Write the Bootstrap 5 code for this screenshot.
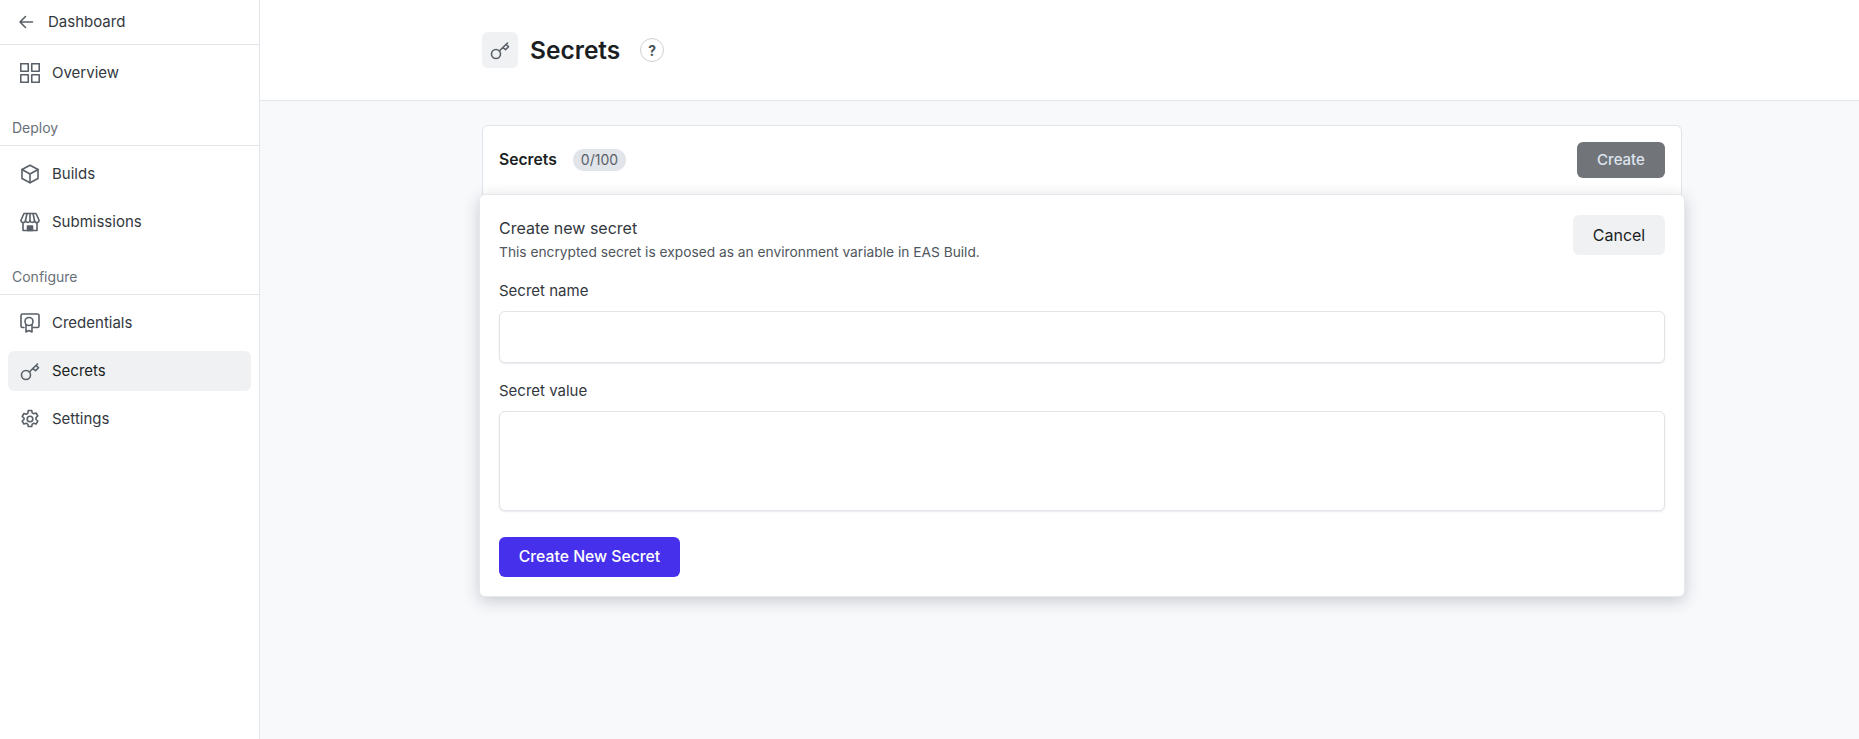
<!DOCTYPE html>
<html lang="en">
<head>
<meta charset="utf-8">
<title>Secrets</title>
<link rel="stylesheet" href="https://cdn.jsdelivr.net/npm/bootstrap@5.3.0/dist/css/bootstrap.min.css">
<style>
html,body{height:100%}
body{font-family:Inter,"Liberation Sans",sans-serif;background:#f8f9fb;color:#1b1f23;overflow:hidden}
.shell{height:739px}
.side{width:260px;flex:none;background:#fff;border-right:1px solid #e1e4e8;height:100%}
.side svg,.page-ico svg{fill:none;stroke:#596068;stroke-width:1.6;stroke-linecap:round;stroke-linejoin:round}
.back-row{height:45px;padding-left:18px;gap:14px;font-size:15px;color:#33383e;border-bottom:1px solid #e1e4e8}
.side-link{height:40px;margin:0 8px 8px;padding:0 12px;gap:12px;border-radius:6px;font-size:15px;color:#33383e;text-decoration:none}
.side-link.on{background:#f0f1f3;color:#1b1f23}
.side-group{height:45px;padding:0 0 7px 12px;font-size:14px;color:#687078;border-bottom:1px solid #e1e4e8;display:flex;align-items:flex-end;margin-bottom:8px}
.top-gap{margin-top:8px}
.main-area{min-width:0}
.page-top{height:101px;background:#fff;border-bottom:1px solid #e1e4e8;padding-left:222px;gap:12px}
.page-ico{width:36px;height:36px;background:#f0f1f3;border-radius:6px}
.page-title{font-size:24.5px;font-weight:600;line-height:1;margin:0 8px 0 0;color:#1b1f23}
.help{width:24px;height:24px;border:1px solid #cdd1d6;border-radius:50%;font-size:14px;font-weight:700;color:#4a5057;background:#fff}
.holder{width:1200px;margin:24px 0 0 222px;position:relative}
.sec-panel{height:71px;background:#fff;border:1px solid #e1e4e8;border-bottom:0;border-radius:6px 6px 0 0;padding:0 16px 2px;}
.sec-name{font-size:15.7px;font-weight:600}
.count{font-size:14px;line-height:1;padding:4px 8px;border-radius:11px;height:22px;background:#e1e4e8;color:#596068;margin-left:16px}
.btn-off{width:88px;height:36px;background:#71757a;color:#dfe5ee;border:0;border-radius:6px;font-size:15px;font-weight:500}
.float-form{position:absolute;top:69px;left:-3px;right:-3px;height:403px;background:#fff;border:1px solid #e6e8eb;border-radius:6px;padding:20px 19px 20px;box-shadow:0 4px 16px rgba(30,40,60,.22)}
.form-h{font-size:16px;line-height:22px;font-weight:400;color:#33383e;margin-top:2px}
.form-sub{font-size:13.75px;line-height:20px;color:#4f565d;margin-top:3px}
.btn-cancel{width:92px;height:40px;background:#f0f1f3;border:0;border-radius:6px;font-size:16px;color:#1b1f23}
.fld-label{font-size:15px;line-height:20px;color:#33383e;margin-bottom:10px;display:block}
.fld{display:block;width:100%;height:52px;background:#fff;border:1px solid #e1e4e8;border-radius:6px;box-shadow:0 1px 2px rgba(30,40,60,.1);margin-bottom:18px}
textarea.fld{height:100px;resize:none;margin-bottom:26px}
.btn-make{width:181px;height:40px;background:#4630eb;color:#fff;border:0;border-radius:6px;font-size:15.75px;font-weight:500}
.fld-first{margin-top:19px}
</style>
</head>
<body>
<div class="shell d-flex">
  <nav class="side">
    <div class="back-row d-flex align-items-center">
      <svg width="16" height="16" viewBox="0 0 16 16"><path d="M14.5 8H2M7.5 2.5 2 8l5.500 5.500"/></svg>
      <span>Dashboard</span>
    </div>
    <div class="top-gap">
      <a class="side-link d-flex align-items-center" href="#">
        <svg width="20" height="20" viewBox="0 0 20 20"><rect x="0.750" y="0.750" width="7.500" height="7.500"/><rect x="11.750" y="0.750" width="7.500" height="7.500"/><rect x="0.750" y="11.750" width="7.500" height="7.500"/><rect x="11.750" y="11.750" width="7.500" height="7.500"/></svg>
        <span>Overview</span>
      </a>
    </div>
    <div class="side-group">Deploy</div>
    <a class="side-link d-flex align-items-center" href="#">
      <svg width="20" height="20" viewBox="0 0 20 20"><path d="M10 1.200 18 5.500v9L10 18.800 2 14.500v-9z"/><path d="M2 5.500 10 10l8-4.500M10 10v8.800"/></svg>
      <span>Builds</span>
    </a>
    <a class="side-link d-flex align-items-center" href="#">
      <svg width="20" height="20" viewBox="0 0 20 20"><path d="M4 1.500h12l3 6.500a2.200 2.200 0 0 1-4.500.6 2.300 2.300 0 0 1-4.500 0 2.300 2.300 0 0 1-4.500 0A2.200 2.200 0 0 1 1 8z"/><path d="M7 1.500 5.500 8.500M13 1.500l1.500 7M10 1.500v7M3 10.500v8h14v-8"/><path d="M7.500 18.500v-4.500h5v4.500z" fill="#596068"/></svg>
      <span>Submissions</span>
    </a>
    <div class="side-group">Configure</div>
    <a class="side-link d-flex align-items-center" href="#">
      <svg width="20" height="20" viewBox="0 0 20 20"><path d="M4 14.500H2.500A1.500 1.500 0 0 1 1 13V2.500A1.500 1.500 0 0 1 2.500 1h15A1.500 1.500 0 0 1 19 2.500V13a1.500 1.500 0 0 1-1.500 1.500H13"/><circle cx="9" cy="8.500" r="4"/><path d="M6 11.500v7.500l3-1.500 3 1.500v-7.500"/></svg>
      <span>Credentials</span>
    </a>
    <a class="side-link on d-flex align-items-center" href="#">
      <svg width="20" height="20" viewBox="0 0 20 20"><circle cx="6" cy="14" r="4.500"/><path d="M9.300 11 17.500 3M13 7.200l2.500 2.500 3-3L16 4.500"/></svg>
      <span>Secrets</span>
    </a>
    <a class="side-link d-flex align-items-center" href="#">
      <svg width="20" height="20" viewBox="0 0 20 20"><circle cx="10" cy="10" r="2.800"/><path d="M8.300 1.500h3.400l.5 2.400 1.600.9 2.300-.8 1.700 3-1.800 1.600v1.800l1.800 1.600-1.700 3-2.300-.8-1.600.9-.5 2.400H8.300l-.5-2.400-1.600-.9-2.300.8-1.700-3 1.800-1.600V9.100L2.200 7.500l1.700-3 2.300.8 1.600-.9z"/></svg>
      <span>Settings</span>
    </a>
  </nav>
  <main class="main-area flex-grow-1">
    <header class="page-top d-flex align-items-center">
      <div class="page-ico d-flex align-items-center justify-content-center">
        <svg width="20" height="20" viewBox="0 0 20 20"><circle cx="6" cy="14" r="4.500"/><path d="M9.300 11 17.500 3M13 7.200l2.500 2.500 3-3L16 4.500"/></svg>
      </div>
      <h1 class="page-title">Secrets</h1>
      <div class="help d-flex align-items-center justify-content-center">?</div>
    </header>
    <div class="holder">
      <div class="sec-panel d-flex align-items-center">
        <span class="sec-name">Secrets</span>
        <span class="count">0/100</span>
        <button class="btn-off ms-auto" type="button">Create</button>
      </div>
      <form class="float-form">
        <div class="d-flex justify-content-between align-items-start">
          <div>
            <div class="form-h">Create new secret</div>
            <div class="form-sub">This encrypted secret is exposed as an environment variable in EAS Build.</div>
          </div>
          <button class="btn-cancel" type="button">Cancel</button>
        </div>
        <label class="fld-label fld-first" for="sn">Secret name</label>
        <input class="fld" id="sn" type="text">
        <label class="fld-label" for="sv">Secret value</label>
        <textarea class="fld" id="sv"></textarea>
        <button class="btn-make" type="button">Create New Secret</button>
      </form>
    </div>
  </main>
</div>
<script src="https://cdn.jsdelivr.net/npm/bootstrap@5.3.0/dist/js/bootstrap.bundle.min.js"></script>
</body>
</html>
